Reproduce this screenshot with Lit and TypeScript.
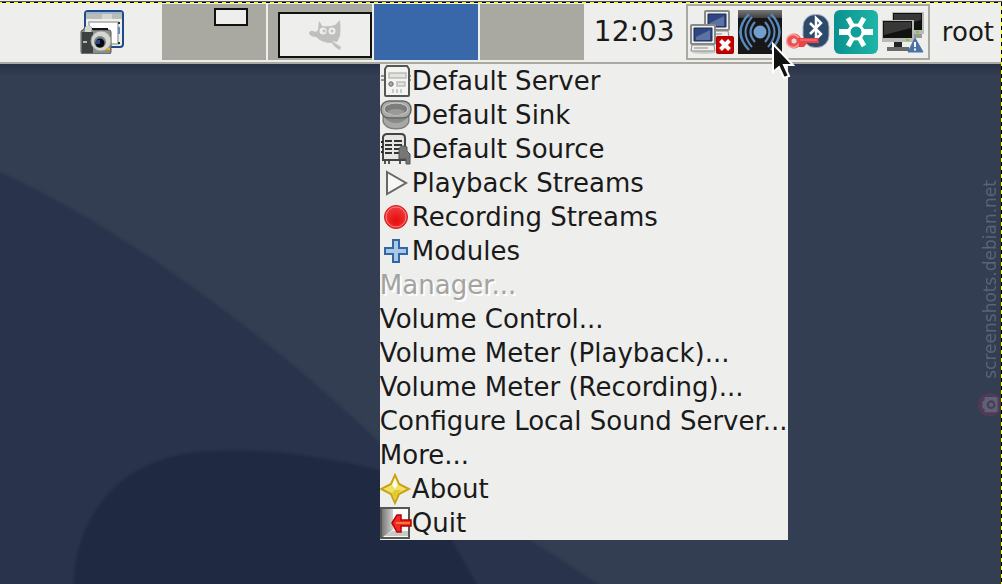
import { LitElement, html, css, svg, type TemplateResult } from "lit";
import { customElement, property } from "lit/decorators.js";

const screenshotIcon = html`<svg viewBox="0 0 44 44" aria-hidden="true">
  <rect x="5" y="1" width="38" height="36" rx="3" fill="#eeeeec" stroke="#204a87" stroke-width="2"/>
  <path d="M6 2h36v2H6z" fill="#9db6cd"/>
  <path d="M6 4h16v5H6zM32 4h10v5H32z" fill="#babdb6"/>
  <path d="M22 4h10v5H22z" fill="#d3d7cf"/>
  <path d="M9 12h29v22H9z" fill="#fff" stroke="#babdb6" stroke-width="2"/>
  <path d="M38 17h2v7h-2z" fill="#5b8fce"/>
  <path d="M38 12h2v2h-2zM38 32h2v2h-2z" fill="#333"/>
  <path d="M1 22q0-2 2-2l2-3h6l2 3h16q2 0 2 2v20q0 2-2 2H3q-2 0-2-2z" fill="#8b8e8a" stroke="#555753"/>
  <path d="M2 22h11v21H2z" fill="#3d4142"/>
  <path d="M12 18h16v2H12z" fill="#171717"/>
  <path d="M3 31h4v2H3z" fill="#b8bab7"/>
  <path d="M5 17q4-3 7 1l-1 4H5z" fill="#d3d7cf"/>
  <circle cx="21" cy="31" r="10" fill="#d3d7cf" stroke="#a0a39f"/>
  <circle cx="20" cy="32" r="6" fill="#77808a"/>
  <circle cx="20" cy="33" r="4.5" fill="#050608"/>
  <path d="M16 30h4v4h-4z" fill="#204a87"/>
  <path d="M26 38h4v2h-4z" fill="#f5a623"/>
</svg>`;

const gimpIcon = html`<svg viewBox="0 0 34 30" aria-hidden="true">
  <path d="M1 13q1-3 4-2 3 2 5-1l1-9q2 2 3 5 8 1 13-1l5-5q1 9 0 16l-3 6-5-1 9 6-1 3q-5-2-8-7-10 0-16-6-6 0-7-4z" fill="#bfc0be"/>
  <circle cx="15" cy="11" r="3.5" fill="#eeeeec"/><circle cx="24" cy="11" r="3.5" fill="#eeeeec"/>
  <circle cx="16" cy="11" r="1.5" fill="#bfc0be"/><circle cx="24" cy="11" r="1.5" fill="#bfc0be"/>
</svg>`;

const pc = (x: number, y: number) => svg`<g transform="translate(${x} ${y})">
  <rect x="1" y="1" width="24" height="19" rx="1" fill="#eeeeec" stroke="#888a85" stroke-width="2"/>
  <path d="M4 4h18v13H4z" fill="#2f4680" stroke="#1b2d5c" stroke-width="1"/>
  <path d="M6 13l14-7v10H6z" fill="#5d71a3"/>
  <path d="M2 21h22l1 6H1z" fill="#eeeeec" stroke="#888a85"/>
  <path d="M4 24h14" stroke="#babdb6" stroke-width="2"/></g>`;

const networkIcon = html`<svg viewBox="0 0 44 44" aria-hidden="true">
  <ellipse cx="14" cy="42.5" rx="12" ry="1.5" fill="#ccc"/>
  ${pc(14, 0)}${pc(0, 14)}
  <rect x="26" y="26" width="18" height="18" rx="2" fill="#c00"/>
  <rect x="27" y="27" width="16" height="16" rx="1" fill="none" stroke="#a00000"/>
  <path d="M30.5 30.5l9 9m0-9l-9 9" stroke="#fff" stroke-width="4"/>
</svg>`;

const audioIcon = html`<svg viewBox="0 0 44 44" aria-hidden="true">
  <defs><linearGradient id="glass" x2="0" y2="1"><stop offset="0" stop-color="#777"/><stop offset=".17" stop-color="#444"/><stop offset=".18" stop-color="#151515"/><stop offset="1" stop-color="#181818"/></linearGradient></defs>
  <path d="M0 0h44v44H0z" fill="url(#glass)"/>
  <circle cx="22" cy="22" r="6.5" fill="#729fcf"/>
  <g fill="none" stroke="#5b88bb" stroke-width="2.2">
    <path d="M17 12Q8 22 17 32M27 12Q36 22 27 32"/>
    <path d="M14 7Q1 22 14 37M30 7Q43 22 30 37" stroke-width="2"/>
    <path d="M11 4Q-6 22 11 40M33 4Q50 22 33 40" stroke-width="2.5"/>
  </g>
</svg>`;

const bluetoothIcon = html`<svg viewBox="0 0 44 44" aria-hidden="true">
  <rect x="17" y="4.5" width="26" height="33" rx="12" fill="#2e4a6b" stroke="#a9b3bf"/>
  <path d="M24 13l11 11-5 5V8l5 5-11 11" fill="none" stroke="#fff" stroke-width="2.5"/>
  <circle cx="8" cy="31" r="5" fill="#ddd" stroke="#ef5050" stroke-width="5"/>
  <circle cx="7" cy="31" r="6.5" fill="none" stroke="#f6a1a1" stroke-width="1.5"/>
  <path d="M12 28h20l1 5H21l-3 4h-5z" fill="#ec4343"/>
  <path d="M14 30h17" stroke="#f38a8a"/>
</svg>`;

const hubIcon = html`<svg viewBox="0 0 44 44" aria-hidden="true">
  <defs><linearGradient id="teal" x2="1" y2="0"><stop offset="0" stop-color="#0a9191"/><stop offset="1" stop-color="#1fb5a6"/></linearGradient></defs>
  <rect width="44" height="44" rx="6" fill="url(#teal)"/>
  <g stroke="#fff" stroke-width="5"><path d="M5 22h10M29 22h10" stroke-width="6"/>
  <path d="M14 8l4.5 8M30 8l-4.5 8M14 36l4.5-8M30 36l-4.5-8"/></g>
  <circle cx="22" cy="22" r="7" fill="#119f9b" stroke="#fff" stroke-width="3"/>
</svg>`;

const monitor = (x: number, y: number) => svg`<g transform="translate(${x} ${y})">
  <path d="M0 0h32v22H0z" fill="#b8bab6"/><path d="M1 1h29v17H1z" fill="#111"/>
  <path d="M2 2h27v6L2 15z" fill="#383838"/>
  <path d="M24 19h3v2h-3z" fill="#73d216"/></g>`;

const monitorsIcon = html`<svg viewBox="0 0 44 44" aria-hidden="true">
  ${monitor(10, 2)}
  <path d="M30 24h10v4H30z" fill="#999"/>
  ${monitor(0, 10)}
  <path d="M12 32h8v5h-8z" fill="#222"/><path d="M5 37h22v4H5z" fill="#6a6a6a"/>
  <path d="M33 28l8 14H26z" fill="#4a73a5" stroke="#4a73a5" stroke-width="1"/>
  <path d="M33 32v5M33 38.5v2" stroke="#fff" stroke-width="2"/>
</svg>`;

const menuIcons: Record<string, TemplateResult> = {
  server: html`<svg viewBox="0 0 32 32" aria-hidden="true">
    <path d="M1 11h4M1 15h4M27 11h4M27 15h4" stroke="#777" stroke-width="1.5"/>
    <path d="M7 1h20l2 3v26q0 1-1 1H6q-1 0-1-1V4z" fill="#f4f4f3" stroke="#555753" stroke-width="2"/>
    <path d="M9 8h17v5H9zM17 17h8v4h-8z" fill="#e3e3e1" stroke="#babdb6" stroke-width="1.5"/>
    <circle cx="11" cy="19" r="2.2" fill="#aaa" stroke="#666"/>
    <path d="M13 24v4M17 24v4M21 24v4" stroke="#babdb6" stroke-width="1.5"/></svg>`,
  sink: html`<svg viewBox="0 0 32 32" aria-hidden="true">
    <path d="M3 14v9q2 7 13 7t13-7v-9z" fill="#888a85" stroke="#777" />
    <path d="M4 18q5 6 12 6t12-6v5q-3 6-12 6T4 23z" fill="#a8a9a7"/>
    <rect x="1" y="2" width="30" height="17" rx="8" fill="#a9aaa8" stroke="#666864" stroke-width="1.5"/>
    <ellipse cx="16" cy="10" rx="12" ry="6" fill="#7d7e7b" stroke="#d3d3d1"/>
    <ellipse cx="16" cy="13" rx="8" ry="3" fill="#9a9b98"/></svg>`,
  source: html`<svg viewBox="0 0 32 32" aria-hidden="true">
    <path d="M3 4q1-3 4-3h14q4 0 4 4v22H3z" fill="#e6e6e4" stroke="#444" stroke-width="2"/>
    <path d="M5 8h7M5 12h7M5 16h7M5 20h7M14 8h8M14 12h8M14 16h8M14 20h8" stroke="#333" stroke-width="2"/>
    <path d="M2 8v2M2 13v2M2 18v2" stroke="#222" stroke-width="2"/>
    <path d="M19 16q2-5 8-2v4l3 3v10h-4v-5h-7z" fill="#777" stroke="#555"/>
    <path d="M5 28v3M9 28v3M20 28v3" stroke="#555" stroke-width="2"/></svg>`,
  play: html`<svg viewBox="0 0 32 32" aria-hidden="true">
    <path d="M7 5l19 11L7 27z" fill="#f7f7f6" stroke="#666864" stroke-width="2"/></svg>`,
  record: html`<svg viewBox="0 0 32 32" aria-hidden="true">
    <defs><radialGradient id="red" cx=".5" cy=".65" r=".6"><stop offset="0" stop-color="#e80d0d"/><stop offset="1" stop-color="#ef3d3d"/></radialGradient></defs>
    <circle cx="16" cy="16" r="11.5" fill="url(#red)" stroke="#d81e1e"/>
    <circle cx="16" cy="16" r="10" fill="none" stroke="#f58080"/></svg>`,
  plus: html`<svg viewBox="0 0 32 32" aria-hidden="true">
    <path d="M13 5h6v8h8v6h-8v8h-6v-8H5v-6h8z" fill="#a9c8e8" stroke="#3465a4" stroke-width="2"/></svg>`,
  star: html`<svg viewBox="0 0 32 32" aria-hidden="true">
    <path d="M15 2l4 9 10 5-10 5-4 9-4-9-10-5 10-5z" fill="#efe06a" stroke="#c9a412" stroke-width="2"/>
    <path d="M15 5l3 7-3 4-3-4z" fill="#fdfbe6"/><path d="M15 17l6 0-3 3-3 6-3-6z" fill="#e2c92c"/></svg>`,
  quit: html`<svg viewBox="0 0 32 32" aria-hidden="true">
    <defs><linearGradient id="door"><stop offset="0" stop-color="#777"/><stop offset="1" stop-color="#d0d0ce"/></linearGradient></defs>
    <path d="M1 1h28v30H1z" fill="#fafafa" stroke="#555753" stroke-width="2"/>
    <path d="M2 2h11v21L3 30H2z" fill="url(#door)"/>
    <path d="M13 24h15v5H4z" fill="#c8c9c6"/>
    <path d="M12 16l5-8h4v5h10v6H21v6h-4z" fill="#ef2929" stroke="#b80000" stroke-width="1.5"/>
    <path d="M16 16h14" stroke="#f57b2a" stroke-width="2"/></svg>`,
};

interface Entry { label: string; icon?: string; disabled?: boolean }

const entries: Entry[] = [
  { label: "Default Server", icon: "server" },
  { label: "Default Sink", icon: "sink" },
  { label: "Default Source", icon: "source" },
  { label: "Playback Streams", icon: "play" },
  { label: "Recording Streams", icon: "record" },
  { label: "Modules", icon: "plus" },
  { label: "Manager...", disabled: true },
  { label: "Volume Control..." },
  { label: "Volume Meter (Playback)..." },
  { label: "Volume Meter (Recording)..." },
  { label: "Configure Local Sound Server..." },
  { label: "More..." },
  { label: "About", icon: "star" },
  { label: "Quit", icon: "quit" },
];

@customElement("audio-menu")
export class AudioMenu extends LitElement {
  @property({ attribute: false }) items: Entry[] = [];

  static styles = css`
    :host { display: block; background: #eeeeec; }
    .menu { margin: 0; padding: 0; list-style: none; }
    .item {
      display: flex; align-items: center; width: 100%; height: 34px;
      margin: 0; padding: 0; border: 0; background: none; color: #1a1a1a;
      font: 26px/34px "DejaVu Sans", sans-serif; text-align: left; white-space: nowrap;
    }
    .item:disabled { color: #a3a4a1; text-shadow: 2px 2px 0 #fff; }
    .icon { display: flex; flex: none; width: 32px; height: 32px; }
    .icon svg { width: 100%; height: 100%; }
  `;

  render() {
    return html`<ul class="menu" role="menu">
      ${this.items.map((e) => html`<li role="none">
        <button class="item" role="menuitem" ?disabled=${e.disabled}>
          ${e.icon ? html`<span class="icon">${menuIcons[e.icon]}</span>` : null}${e.label}
        </button></li>`)}
    </ul>`;
  }
}

@customElement("app-root")
export class AppRoot extends LitElement {
  static styles = css`
    :host {
      display: block; position: relative; min-height: 100vh; overflow: hidden;
      background: #343e52; font-family: "DejaVu Sans", sans-serif; color: #1a1a1a;
    }
    button { margin: 0; padding: 0; border: 0; background: none; color: inherit; font: inherit; }
    svg { display: block; width: 100%; height: 100%; }
    .wallpaper { position: absolute; inset: 0; }
    .edge-top, .edge-right { position: absolute; z-index: 3; }
    .edge-top {
      left: 0; right: 0; top: 2px; height: 1px;
      background: repeating-linear-gradient(90deg, #ff0 0 2px, #000 2px 6px, #ff0 6px 8px);
    }
    .edge-right {
      right: 0; top: 2px; bottom: 0; width: 1px;
      background: repeating-linear-gradient(#000 0 4px, #ff0 4px 8px);
    }
    .panel {
      position: relative; z-index: 1; display: flex; justify-content: flex-end; align-items: center;
      box-sizing: border-box; height: 64px; padding: 2px 8px 2px 80px;
      background: #eeeeec; border-bottom: 2px solid #a9a9a1; border-top: 1px solid #eeeeec;
      box-shadow: inset 0 1px #555753; font-size: 26px; line-height: 32px;
    }
    .launcher { width: 44px; height: 44px; margin-right: auto; }
    .pager { display: flex; gap: 2px; align-self: stretch; margin: 1px 10px 0 0; }
    .desk { position: relative; width: 104px; background: #a9a9a1; }
    .desk.current { background: #3868a9; }
    .window {
      position: absolute; box-sizing: border-box; border: 2px solid #111; background: #eeeeec;
      display: flex; align-items: center; justify-content: center;
    }
    .small { left: 52px; top: 4px; width: 34px; height: 18px; }
    .large { left: 10px; top: 8px; width: 94px; height: 46px; }
    .gimp { width: 34px; height: 30px; }
    .clock { width: 92px; font-size: 28px; white-space: nowrap; }
    .tray {
      display: flex; align-items: center; align-self: stretch; gap: 4px;
      margin: 1px 12px 0 0; padding: 0 2px; border: 2px solid #a9a9a1;
    }
    .slot { position: relative; }
    .tray-icon { display: block; width: 44px; height: 44px; }
    .popup { position: absolute; left: -358px; top: 54px; }
    .pointer { position: absolute; left: 33px; top: 32px; width: 26px; height: 38px; z-index: 2; }
    .watermark {
      position: absolute; right: 0; top: 180px; display: flex; align-items: center; gap: 14px;
      writing-mode: vertical-rl; transform: rotate(180deg);
      font-size: 17px; line-height: 24px; color: #5b6375;
    }
    .badge { width: 24px; height: 24px; transform: rotate(180deg); }
  `;

  render() {
    return html`
      <div class="wallpaper"><svg viewBox="0 0 1002 584" preserveAspectRatio="none" aria-hidden="true">
        <defs>
          <linearGradient id="shade" x2="0" y2="1"><stop offset="0" stop-color="#283147"/><stop offset="1" stop-color="#343e52"/></linearGradient>
          <filter id="soft" color-interpolation-filters="sRGB"><feGaussianBlur stdDeviation="1.5"/></filter>
        </defs>
        <path d="M0 0h1002v584H0z" fill="#343e52"/>
        <path d="M0 64h1002v12H0z" fill="url(#shade)"/>
        <g filter="url(#soft)">
          <path d="M-9 168C100 215 250 318 380 443Q460 504 530 540L608 590H-9z" fill="#29334b"/>
          <path d="M73 590C75 505 130 452 215 451C275 448 330 458 380 470Q430 490 452 540L480 590z" fill="#1f2a42"/>
        </g>
      </svg></div>
      <header class="panel">
        <button class="launcher" aria-label="Take screenshot">${screenshotIcon}</button>
        <div class="pager">
          <button class="desk" aria-label="Workspace 1"><span class="window small"></span></button>
          <button class="desk" aria-label="Workspace 2"><span class="window large"><span class="gimp">${gimpIcon}</span></span></button>
          <button class="desk current" aria-label="Workspace 3"></button>
          <button class="desk" aria-label="Workspace 4"></button>
        </div>
        <time class="clock">12:03</time>
        <div class="tray">
          <button class="tray-icon" aria-label="Network">${networkIcon}</button>
          <div class="slot">
            <button class="tray-icon" aria-label="Audio" aria-haspopup="menu">${audioIcon}</button>
            <audio-menu class="popup" .items=${entries}></audio-menu>
            <svg class="pointer" viewBox="0 0 26 38" aria-hidden="true">
              <path d="M2 2v28l6-5 5 11 5-2-5-11h9z" fill="#111" stroke="#fff" stroke-width="2"/>
            </svg>
          </div>
          <button class="tray-icon" aria-label="Bluetooth">${bluetoothIcon}</button>
          <button class="tray-icon" aria-label="Hub">${hubIcon}</button>
          <button class="tray-icon" aria-label="Displays">${monitorsIcon}</button>
        </div>
        <button class="user">root</button>
      </header>
      <div class="watermark">
        <span class="badge"><svg viewBox="0 0 22 22" aria-hidden="true">
          <circle cx="11" cy="11" r="11" fill="#513a57"/>
          <path d="M4 8l2-1V5q0-1 1-1h9q2 0 2 2v10q0 2-2 2H7q-1 0-1-1v-2l-2-1z" fill="#5b6375"/>
          <circle cx="12" cy="11" r="3" fill="#5b6375" stroke="#513a57" stroke-width="2"/>
        </svg></span>
        <span>screenshots.debian.net</span>
      </div>
      <div class="edge-top"></div>
      <div class="edge-right"></div>
    `;
  }
}
